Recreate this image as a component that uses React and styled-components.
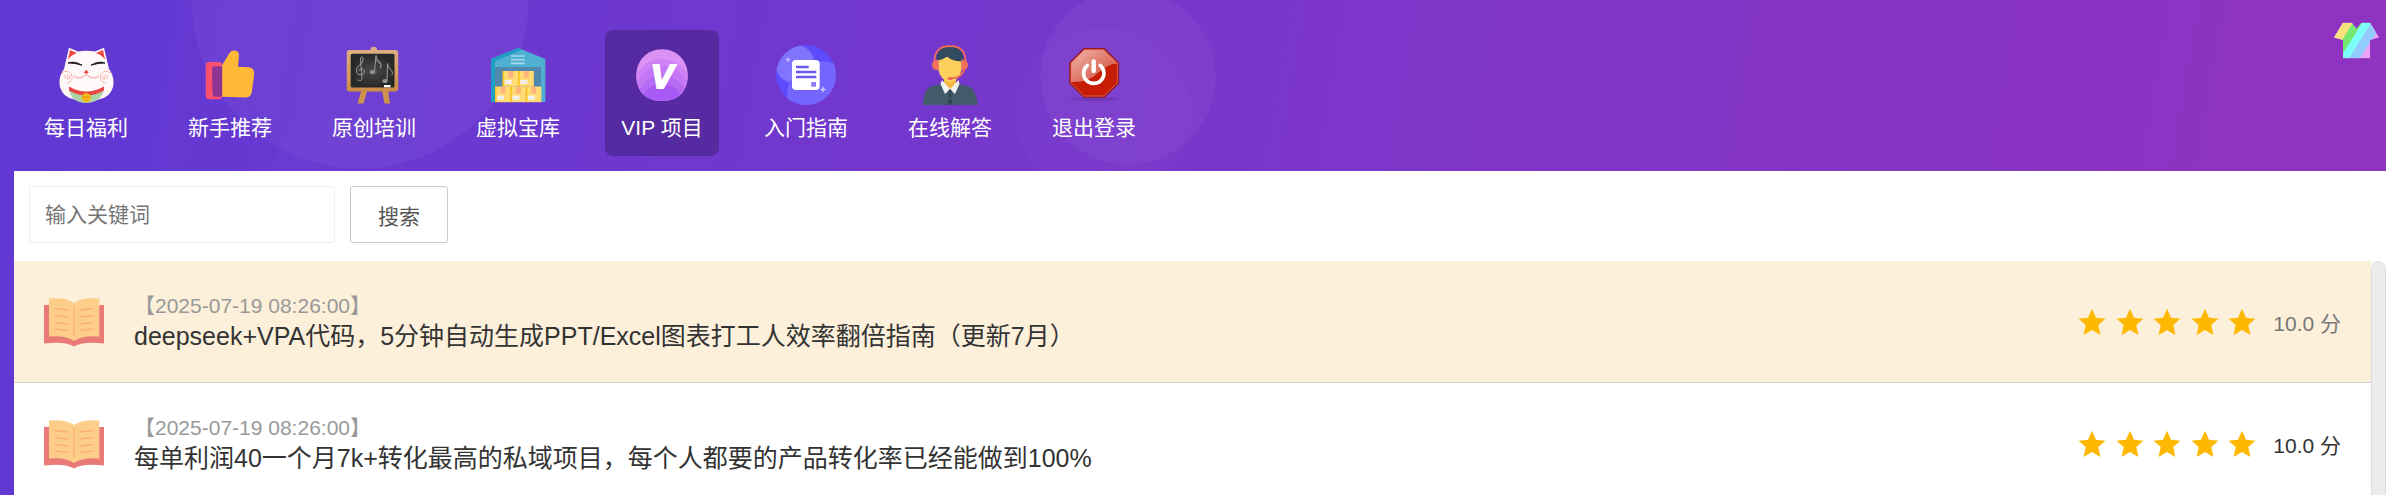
import React from 'react'
import styled, { createGlobalStyle } from "styled-components";

const GlobalStyle = createGlobalStyle`
    * {
        box-sizing: border-box;
    }
    body {
        margin: 0;
        overflow: hidden;
        font-family: "Liberation Sans", "Noto Sans CJK SC", sans-serif;
        color: #333;
    }
`

const CatIcon = () => (
    <Icon viewBox="0 0 60 60" aria-hidden="true">
        <path d="M13 2.7 L22 6.5 Q30 5 39 6.5 L48 2.7 L53 24 Q59 32 57 42 Q54 52 44 54 Q30 61 17 54 Q7 52 4 42 Q2 32 8 24 Z" fill="#fff8f8" />
        <path d="M14 5 L21 8 Q15 10 12 14.500 Z M47 5 L40 8 Q46 10 49 14.500 Z" fill="#ee4a45" />
        <path d="M13 45 Q30 54 48 45 Q46 53 39 56 Q30 60 21 56 Q15 53 13 45Z" fill="#aad4a6" />
        <path d="M13 41.5 Q30 51.5 48 41.5 V45.5 Q30 55.5 13 45.5 Z" fill="#ea4641" />
        <path d="M12 18 Q18.5 15.5 26 20.2 Q18.5 17.8 12 18 Z M49 18 Q42.500 15.5 35 20.2 Q42.500 17.8 49 18 Z" fill="#111" stroke="#111" strokeWidth=".9" />
        <path d="M30.300 24.700 L32.700 27.500 L30.300 29 L27.900 27.500 Z" fill="#ee4a45" />
        <path d="M18 31 Q23 35 28 31 L30.300 29.500 L32.700 31 Q38 35 42.700 31" fill="none" stroke="#ef6a64" strokeWidth=".7" />
        <path d="M5 29 Q10 23.500 15.500 29 Q18 37 11 38 M55.500 29 Q50 23.500 45 29 Q42.500 37 49.500 38 M8.500 30 L10 34 M11.500 29.500 L12 34.500 M14 30.500 L13 34.500 M52 30 L50.500 34 M49 29.500 L48.500 34.500 M46.500 30.500 L47.500 34.500" fill="none" stroke="#f4a3a0" strokeWidth=".8" />
        <circle cx="30.300" cy="52.700" r="4.600" fill="#f8b91b" />
        <path d="M26 52 H34.700 M30.300 53 V56" stroke="#d9920c" strokeWidth=".9" />
    </Icon>
)

const ThumbIcon = () => (
    <Icon viewBox="0 0 60 60" aria-hidden="true">
        <rect x="5.700" y="17" width="16.500" height="37.300" rx="3.500" fill="#fd4f6f" />
        <path d="M22.200 21.300 H15 Q12 21.300 12 24.500 L12.500 48 Q12.500 51.700 16 51.700 H22.200 Z" fill="#8e3594" />
        <path d="M22.200 20 L29.500 8 Q31.500 5 35.500 5.700 Q39 6.500 39 10 L38 21.700 L49 22.300 Q54.500 23 54.200 29 L52 46 Q51 52.500 46 52.500 L22.200 51.700 Z" fill="#ffb936" />
    </Icon>
)

const BoardIcon = () => (
    <Icon viewBox="0 0 60 60" aria-hidden="true">
        <defs>
            <linearGradient id="wood" x1="0" y1="0" x2="0" y2="1">
                <stop offset="0" stopColor="#dcae83" />
                <stop offset="1" stopColor="#cb8d45" />
            </linearGradient>
            <radialGradient id="slate">
                <stop offset="0" stopColor="#4b4b4b" />
                <stop offset="1" stopColor="#262827" />
            </radialGradient>
        </defs>
        <path d="M17.500 45 H23.500 L19.500 58.500 H13.500 Z M38 45 H44 L46 58.500 H40.500 Z" fill="#cf934c" />
        <rect x="26.500" y="2" width="6.500" height="7" rx="2" fill="#dcae83" />
        <rect x="2.700" y="5" width="51.500" height="41.500" rx="3" fill="url(#wood)" />
        <rect x="6.700" y="8.700" width="43.800" height="33.800" rx="1.500" fill="url(#slate)" />
        <g fill="none" stroke="#9c9c9c" strokeWidth="1" strokeLinecap="round">
            <path d="M14 35 Q18 37 18 33 L16.500 14 Q17.500 10 19 13 Q20 17 14.500 21 Q10 26 14.500 29.500 Q21 30.500 20.500 26 Q18 21.500 14.500 25.500" />
            <path d="M30.500 26 L32 10.500 Q32 15 36 17 Q38 19 36.500 23 M32 14.500 Q34 18 36.500 19" />
            <path d="M43 35 L43.500 18.500 Q44 23 47.500 25.500 Q49.500 27 48 30" />
        </g>
        <ellipse cx="28.500" cy="27" rx="2.800" ry="2" fill="#8f8f8f" />
        <ellipse cx="41" cy="36" rx="2.800" ry="2" fill="#8f8f8f" />
        <rect x="40" y="40" width="6.500" height="2.300" fill="#fff" />
    </Icon>
)

const boxes = [[14.7, 26], [30.3, 26], [7, 41.6], [22.4, 41.6], [37.8, 41.6]]

const StoreIcon = () => (
    <Icon viewBox="0 0 60 60" aria-hidden="true">
        <path d="M3 14 L30.300 3 L57.300 14 V57 H3 Z" fill="#4fb0d2" />
        <path d="M3 14 L30.300 3 L34 4.500 L7 16.500 V57 H3 Z" fill="#1f9dc5" />
        <rect x="7" y="22" width="46" height="35" fill="#5189ae" />
        <path d="M23 11 H36.700 M23 14.700 H36.700 M23 18.400 H36.700" stroke="#a6d8e9" strokeWidth="1.600" />
        {boxes.map(([x, y]) => (
            <g key={`${x}-${y}`}>
                <rect x={x} y={y} width="15.500" height="15.600" fill="#ffdb72" />
                <rect x={x} y={y} width="1.500" height="15.600" fill="#ffc41b" />
                <rect x={x + 5.5} y={y} width="5" height="7" fill="#ffb57d" />
                <rect x={x + 2} y={y + 9} width="7" height="4" fill="#f2f0ee" />
            </g>
        ))}
    </Icon>
)

const VipIcon = () => (
    <Icon viewBox="0 0 60 60" aria-hidden="true">
        <clipPath id="vipRound">
            <path d="M30 4.300 C46 4.300 55.700 17 55.700 30 C55.700 47 45 56 30 56 C15 56 4.300 47 4.300 30 C4.300 17 14 4.300 30 4.300 Z" />
        </clipPath>
        <g clipPath="url(#vipRound)">
            <rect width="60" height="60" fill="#dc92f5" />
            <circle cx="30" cy="43" r="29" fill="#cf82f5" />
            <circle cx="30" cy="48" r="27" fill="#c377f4" />
            <circle cx="30" cy="55" r="25" fill="#b76bf4" />
            <circle cx="30" cy="61" r="22" fill="#a959f4" />
        </g>
        <text x="30" y="43" textAnchor="middle" fontFamily="Liberation Sans, sans-serif" fontSize="34" fontWeight="700" fontStyle="italic" fill="#fff" stroke="#fff" strokeWidth="2">V</text>
    </Icon>
)

const GuideIcon = () => (
    <Icon viewBox="0 0 60 60" aria-hidden="true">
        <clipPath id="guideRound">
            <circle cx="30" cy="30" r="30" />
        </clipPath>
        <g clipPath="url(#guideRound)">
            <rect width="60" height="60" fill="#5c4afb" />
            <circle cx="19" cy="19" r="19.500" fill="#8173fb" />
            <circle cx="45" cy="50" r="34" fill="#7465fd" />
            <path d="M12 31 Q16 21 25 17.500 Q34 15 38 20 Q35 34 22 38 Q14 38 12 31 Z" fill="#8d80fc" opacity=".6" />
        </g>
        <rect x="16" y="15" width="27.700" height="30" rx="4" fill="#fff" />
        <path d="M20 22 H32.700 M20 27 H40.300 M20 32 H40.300" stroke="#6959f2" strokeWidth="2.400" />
        <rect x="35.300" y="37" width="4.700" height="4.700" fill="#8a7dfa" />
        <path d="M12 12 L12.800 14 L15 14.700 L12.800 15.500 L12 17.500 L11.200 15.500 L9 14.700 L11.200 14 Z M47 41 L48 43.500 L50.500 44.400 L48 45.400 L47 48 L46 45.400 L43.500 44.400 L46 43.500 Z" fill="#c9c3ff" />
    </Icon>
)

const AgentIcon = () => (
    <Icon viewBox="0 0 60 60" aria-hidden="true">
        <path d="M2.700 60 Q4 44 11 41.500 L23 38.500 H37 L49 41.500 Q56 44 57.700 60 Z" fill="#435a6a" />
        <path d="M24 32 H36 V40 L30 45 L24 40 Z" fill="#f7b63f" />
        <path d="M22 35 L30 44 L25 49 L20.500 39 Z M38.500 35 L30 44 L35 49 L39.500 39 Z" fill="#f1f2f2" />
        <path d="M28 46 L30 44 L32 46 L31.500 49 L33 60 H27 L28.500 49 Z" fill="#3a4f5e" />
        <circle cx="30" cy="50" r="1.200" fill="#26384a" />
        <circle cx="30" cy="56.500" r="1.200" fill="#26384a" />
        <path d="M18.300 12 H41.700 V24 Q40 35 30 37.500 Q20 35 18.300 24 Z" fill="#fdd05c" />
        <path d="M16.500 16 Q16 2 30 1.500 Q44 2 43.500 16 Q34 17.500 27 11.500 Q24 14 16.500 16 Z" fill="#344a5e" />
        <path d="M14.500 18 Q13.500 1.200 30 1.200 Q46.500 1.200 45.500 18 M45 22 Q43 33 31 33.300" fill="none" stroke="#f06e57" strokeWidth="1.700" />
        <path d="M18.500 14.500 V25.500 Q12 25 12 20 Q12 15 18.500 14.500 Z M41.500 14.500 V25.500 Q48 25 48 20 Q48 15 41.500 14.500 Z" fill="#f27057" />
        <ellipse cx="30" cy="33.500" rx="2.500" ry="1.600" fill="#ef6350" />
    </Icon>
)

const PowerIcon = () => (
    <Icon viewBox="0 0 60 60" aria-hidden="true">
        <defs>
            <linearGradient id="gloss" x1="0" y1="0" x2="1" y2="1">
                <stop offset="0" stopColor="#f2b5ad" />
                <stop offset="1" stopColor="#cf4430" />
            </linearGradient>
        </defs>
        <ellipse cx="30" cy="54" rx="24" ry="2" fill="#4f278f" opacity=".3" />
        <path d="M20 3.500 H40.300 L54.500 17.700 V38.300 L40.300 52.200 H20 L5.800 38.300 V17.700 Z" fill="#c61d04" stroke="#8c1a2b" strokeWidth="1.200" />
        <path d="M20.400 4.800 H39.800 L53.300 18 V18.500 Q43 19 34 28 Q24 38 7 37 V18 Z" fill="url(#gloss)" />
        <path d="M20.400 4.800 H39.800 L53.300 18 V37.800 L39.800 51 H20.400 L7 37.800 V18 Z" fill="none" stroke="#e0705c" strokeWidth=".8" />
        <path d="M23.300 20.300 A10.200 10.200 0 1 0 36.200 20.300" fill="none" stroke="#fff" strokeWidth="3.600" strokeLinecap="round" />
        <path d="M29.700 16.500 V26" stroke="#fff" strokeWidth="4.400" strokeLinecap="round" />
    </Icon>
)

const BookIcon = () => (
    <Icon viewBox="0 0 60 60" aria-hidden="true">
        <path d="M0 13 H60 V51.500 Q38 49 30 54.500 Q22 49 0 51.500 Z" fill="#e97a78" />
        <path d="M5 6.500 Q22 5 30 11 Q38 5 55.300 6.500 V44.500 Q38 43 30 49 Q22 43 5 44.500 Z" fill="#fdce8a" />
        <path d="M30 14 V44" stroke="#fdb57a" strokeWidth="1.500" />
        <path d="M11 16.500 L24 18 M11 23.500 L24 25 M11 30.500 L24 32 M11 37 L24 38.500 M49 16.500 L36 18 M49 23.500 L36 25 M49 30.500 L36 32 M49 37 L36 38.500" stroke="#fdb070" strokeWidth="1.400" strokeLinecap="round" />
    </Icon>
)

const ShirtIcon = () => (
    <Shirt viewBox="0 0 45 36" aria-hidden="true">
        <clipPath id="shirt">
            <path d="M9 0 H17.500 L22.500 6.500 L27.500 0 H36 L45 15 L36 17.500 V36 H9 V17.500 L0 15 Z" />
        </clipPath>
        <g clipPath="url(#shirt)">
            <rect width="45" height="36" fill="#eaa5f8" />
            <path d="M0 0 H20 L0 33 Z" fill="#f5e27c" />
            <path d="M19 0 H30 L8 36 H0 V31 Z" fill="#74e873" />
            <path d="M28.500 0 H37.500 L15 36 H4 L9 31 Z" fill="#7dfff9" />
            <path d="M37.500 0 H49 L25.500 36 H15 Z" fill="#92ccff" />
        </g>
    </Shirt>
)

const StarIcon = () => (
    <Star viewBox="0 0 28 28" aria-hidden="true">
        <path d="M14 .8 L18 9.700 L27.400 10.700 L20.300 17.100 L22.400 27 L14 22 L5.600 27 L7.700 17.100 L.6 10.700 L10 9.700 Z" fill="#ffb800" />
    </Star>
)

const menu = [
    { name: "每日福利", icon: CatIcon },
    { name: "新手推荐", icon: ThumbIcon },
    { name: "原创培训", icon: BoardIcon },
    { name: "虚拟宝库", icon: StoreIcon },
    { name: "VIP 项目", icon: VipIcon, active: true },
    { name: "入门指南", icon: GuideIcon },
    { name: "在线解答", icon: AgentIcon },
    { name: "退出登录", icon: PowerIcon },
]

const posts = [
    {
        time: "【2025-07-19 08:26:00】",
        title: "deepseek+VPA代码，5分钟自动生成PPT/Excel图表打工人效率翻倍指南（更新7月）",
        score: "10.0 分",
        highlighted: true,
    },
    {
        time: "【2025-07-19 08:26:00】",
        title: "每单利润40一个月7k+转化最高的私域项目，每个人都要的产品转化率已经能做到100%",
        score: "10.0 分",
    },
]

const Post = ({ time, title, score, highlighted }) => {
    return (
        <Row href="#" $highlighted={highlighted}>
            <BookIcon />
            <Info>
                <Time>{time}</Time>
                <Title>{title}</Title>
            </Info>
            <Stars>
                {[1, 2, 3, 4, 5].map(n => <StarIcon key={n} />)}
            </Stars>
            <Score $muted={highlighted}>{score}</Score>
        </Row>
    );
};

const App = () => {
    return (
        <Page>
            <GlobalStyle />
            <Header>
                <Nav>
                    {menu.map(({ name, icon: ItemIcon, active }) => (
                        <NavItem key={name} href="#" $active={active}>
                            <ItemIcon />
                            <NavLabel>{name}</NavLabel>
                        </NavItem>
                    ))}
                </Nav>
                <SkinButton type="button" aria-label="换肤">
                    <ShirtIcon />
                </SkinButton>
            </Header>
            <Panel>
                <Search onSubmit={e => e.preventDefault()}>
                    <Keyword type="text" placeholder="输入关键词" aria-label="输入关键词" />
                    <SearchButton type="submit">搜索</SearchButton>
                </Search>
                <ListWrap>
                    <List>
                        {posts.map(post => <Post key={post.title} {...post} />)}
                    </List>
                    <ScrollThumb />
                </ListWrap>
            </Panel>
        </Page>
    );
};

const Page = styled.div`
    display: flex;
    flex-direction: column;
    height: 100vh;
    overflow: hidden;
    background:
        radial-gradient(circle at 360px 0, rgba(255, 255, 255, .045) 168px, transparent 169px),
        radial-gradient(circle at 336px 188px, rgba(255, 255, 255, .015) 69px, transparent 70px),
        radial-gradient(circle at 1128px 77px, rgba(255, 255, 255, .04) 87px, transparent 88px),
        radial-gradient(circle at 1104px 115px, rgba(255, 255, 255, .015) 87px, transparent 88px),
        linear-gradient(100deg, #6038d3 0%, #7637cc 42%, #9133c0 100%);
`
const Header = styled.header`
    display: flex;
    justify-content: space-between;
    align-items: flex-start;
    padding: 22px 0 15px 29px;
`
const Nav = styled.nav`
    display: flex;
    gap: 30px;
    padding-top: 8px;
`
const NavItem = styled.a`
    display: flex;
    flex-direction: column;
    align-items: center;
    gap: 10px;
    width: 114px;
    padding: 15px 0;
    border-radius: 8px;
    background: ${props => props.$active ? "rgba(0, 0, 0, .22)" : "none"};
    color: #fff;
    text-decoration: none;
`
const NavLabel = styled.span`
    font-size: 21px;
    line-height: 26px;
    white-space: nowrap;
`
const Icon = styled.svg`
    display: block;
    flex: none;
    width: 60px;
    height: 60px;
`
const SkinButton = styled.button`
    padding: 0 7px;
    border: 0;
    background: none;
    cursor: pointer;
`
const Shirt = styled.svg`
    display: block;
    width: 45px;
    height: 37px;
`
const Panel = styled.main`
    display: flex;
    flex-direction: column;
    flex: 1;
    min-height: 0;
    margin-left: 14px;
    background: #fff;
`
const Search = styled.form`
    display: flex;
    gap: 15px;
    padding: 15px 15px 18px;
`
const Keyword = styled.input`
    width: 306px;
    height: 57px;
    padding: 0 15px;
    border: 1px solid #eee;
    border-radius: 3px;
    background: #fff;
    font: inherit;
    font-size: 21px;
    &::placeholder {
        color: #757575;
    }
`
const SearchButton = styled.button`
    height: 57px;
    padding: 0 27px;
    border: 1px solid #c9c9c9;
    border-radius: 3px;
    background: #fff;
    color: #555;
    font: inherit;
    font-size: 21px;
    cursor: pointer;
`
const ListWrap = styled.div`
    display: flex;
    flex: 1;
    min-height: 0;
`
const List = styled.div`
    flex: 1;
    min-width: 0;
`
const ScrollThumb = styled.div`
    width: 15px;
    margin-bottom: -15px;
    border: 1px solid #dcdcdc;
    border-radius: 8px;
    background: #ececec;
`
const Row = styled.a`
    display: flex;
    align-items: center;
    padding: 30px;
    border-bottom: 1px solid #d2d2d2;
    background: ${props => props.$highlighted ? "#fcf0da" : "#fff"};
    color: #333;
    text-decoration: none;
`
const Info = styled.div`
    flex: 1;
    min-width: 0;
    margin-left: 30px;
`
const Time = styled.div`
    color: #999;
    font-size: 21px;
    line-height: 30px;
`
const Title = styled.div`
    font-size: 25px;
    line-height: 31px;
    white-space: nowrap;
`
const Stars = styled.div`
    display: grid;
    grid-template-columns: repeat(5, 1fr);
    justify-items: center;
    width: 188px;
    margin-right: 12px;
`
const Star = styled.svg`
    display: block;
    width: 28px;
    height: 28px;
`
const Score = styled.span`
    color: ${props => props.$muted ? "#777" : "#333"};
    font-size: 21px;
`

export default App;
